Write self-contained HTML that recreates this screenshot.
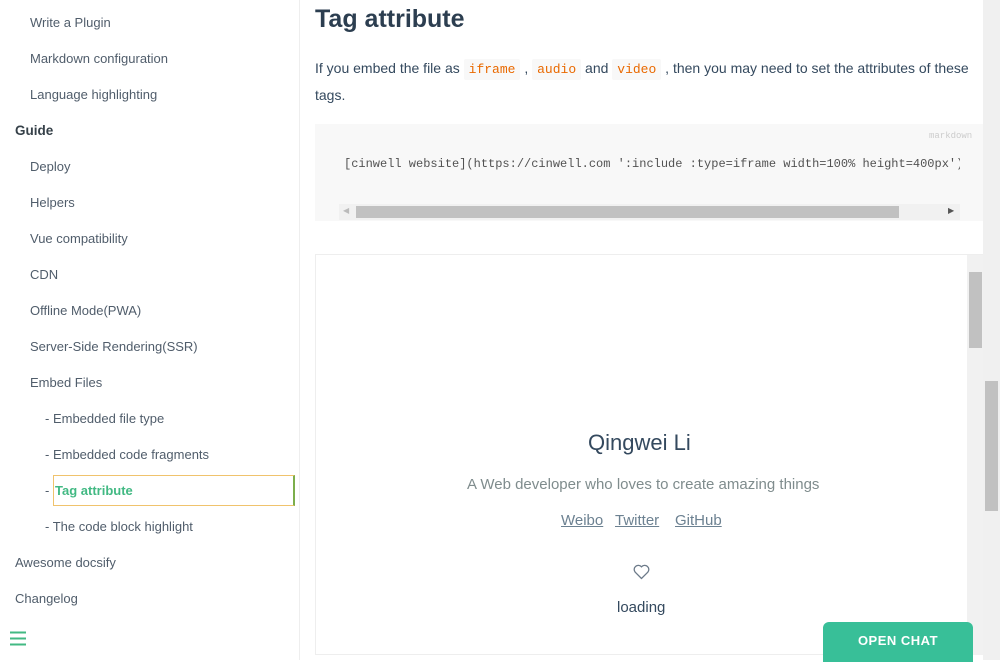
<!DOCTYPE html>
<html><head><meta charset="utf-8"><style>
*{margin:0;padding:0;box-sizing:border-box}
body{width:1000px;height:660px;overflow:hidden;background:#fff;font-family:"Liberation Sans",sans-serif;position:relative;color:#34495e}
.sb{position:absolute;left:0;top:0;width:300px;height:660px;border-right:1px solid #eee;background:#fff}
.sb div{position:absolute;font-size:13px;color:#505d6b;white-space:nowrap;line-height:16px}
.sb .h{font-weight:bold;color:#364149;font-size:13.5px}
.act{position:absolute;left:53px;top:475px;width:242px;height:31px;border:1.5px solid #f0c36d;border-right:2px solid #7cae4b}
.m{position:absolute;white-space:nowrap}
code{font-family:"Liberation Mono",monospace;color:#e96900;background:#f8f8f8;padding:3px 5px;font-size:13px;border-radius:2px}
</style></head><body>
<div class="sb">
<div style="left:30px;top:15px">Write a Plugin</div>
<div style="left:30px;top:51px">Markdown configuration</div>
<div style="left:30px;top:87px">Language highlighting</div>
<div class="h" style="left:15px;top:123px">Guide</div>
<div style="left:30px;top:159px">Deploy</div>
<div style="left:30px;top:195px">Helpers</div>
<div style="left:30px;top:231px">Vue compatibility</div>
<div style="left:30px;top:267px">CDN</div>
<div style="left:30px;top:303px">Offline Mode(PWA)</div>
<div style="left:30px;top:339px">Server-Side Rendering(SSR)</div>
<div style="left:30px;top:375px">Embed Files</div>
<div style="left:45px;top:411px">- Embedded file type</div>
<div style="left:45px;top:447px">- Embedded code fragments</div>
<div style="left:45px;top:483px">-</div>
<div style="left:55px;top:483px;color:#42b983;font-weight:bold">Tag attribute</div>
<div style="left:45px;top:519px">- The code block highlight</div>
<div style="left:15px;top:555px">Awesome docsify</div>
<div style="left:15px;top:591px">Changelog</div>
<span class="act"></span>
<svg style="position:absolute;left:10px;top:631px" width="17" height="15"><path d="M0 1.5H16M0 7.5H16M0 13.5H16" stroke="#42b983" stroke-width="2"/></svg>
</div>
<div class="m" style="left:315px;top:5px;font-size:25px;font-weight:bold;color:#2c3e50">Tag attribute</div>
<div class="m" style="left:315px;top:60px;font-size:14px;color:#34495e">If you embed the file as <code>iframe</code> , <code>audio</code> and <code>video</code> , then you may need to set the attributes of these</div>
<div class="m" style="left:315px;top:87px;font-size:14px">tags.</div>
<div style="position:absolute;left:315px;top:124px;width:668px;height:97px;background:#f8f8f8"></div>
<div class="m" style="left:929px;top:131px;font-size:9px;color:#ccc;font-family:'Liberation Mono',monospace">markdown</div>
<div class="m" style="left:344px;top:157px;font-size:12px;color:#525252;font-family:'Liberation Mono',monospace;width:616px;overflow:hidden">[cinwell website](https://cinwell.com ':include :type=iframe width=100% height=400px')</div>
<div style="position:absolute;left:339px;top:204px;width:621px;height:16px;background:#f1f1f1"></div>
<div style="position:absolute;left:356px;top:206px;width:543px;height:12px;background:#c1c1c1"></div>
<div class="m" style="left:343px;top:206px;font-size:8px;color:#bbb">◀</div>
<div class="m" style="left:948px;top:206px;font-size:8px;color:#555">▶</div>
<div style="position:absolute;left:315px;top:254px;width:668px;height:401px;border:1px solid #eee"></div>
<div style="position:absolute;left:967px;top:255px;width:16px;height:400px;background:#f1f1f1"></div>
<div style="position:absolute;left:969px;top:272px;width:13px;height:76px;background:#c1c1c1"></div>
<div style="position:absolute;left:983px;top:0;width:17px;height:660px;background:#f0f0f0"></div>
<div style="position:absolute;left:985px;top:381px;width:13px;height:130px;background:#c1c1c1"></div>
<div class="m" style="left:588px;top:430px;font-size:22px;color:#34495e">Qingwei Li</div>
<div class="m" style="left:467px;top:476px;font-size:15px;color:#7f8c8d">A Web developer who loves to create amazing things</div>
<div class="m" style="left:561px;top:512px;font-size:15px;color:#6c8191;text-decoration:underline">Weibo</div>
<div class="m" style="left:615px;top:512px;font-size:15px;color:#6c8191;text-decoration:underline">Twitter</div>
<div class="m" style="left:675px;top:512px;font-size:15px;color:#6c8191;text-decoration:underline">GitHub</div>
<svg style="position:absolute;left:633px;top:564px" width="17" height="16" viewBox="0 0 17 16"><path d="M8.5 14.5L2.2 8.2A3.7 3.7 0 0 1 8.5 2.8A3.7 3.7 0 0 1 14.8 8.2Z" fill="none" stroke="#6c7a89" stroke-width="1.3"/></svg>
<div class="m" style="left:617px;top:599px;font-size:15px;color:#34495e">loading</div>
<div style="position:absolute;left:823px;top:622px;width:150px;height:40px;background:#38bf98;border-radius:6px 6px 0 0;color:#fff;font-weight:bold;font-size:13px;text-align:center;line-height:37px;letter-spacing:.5px">OPEN CHAT</div>
</body></html>
